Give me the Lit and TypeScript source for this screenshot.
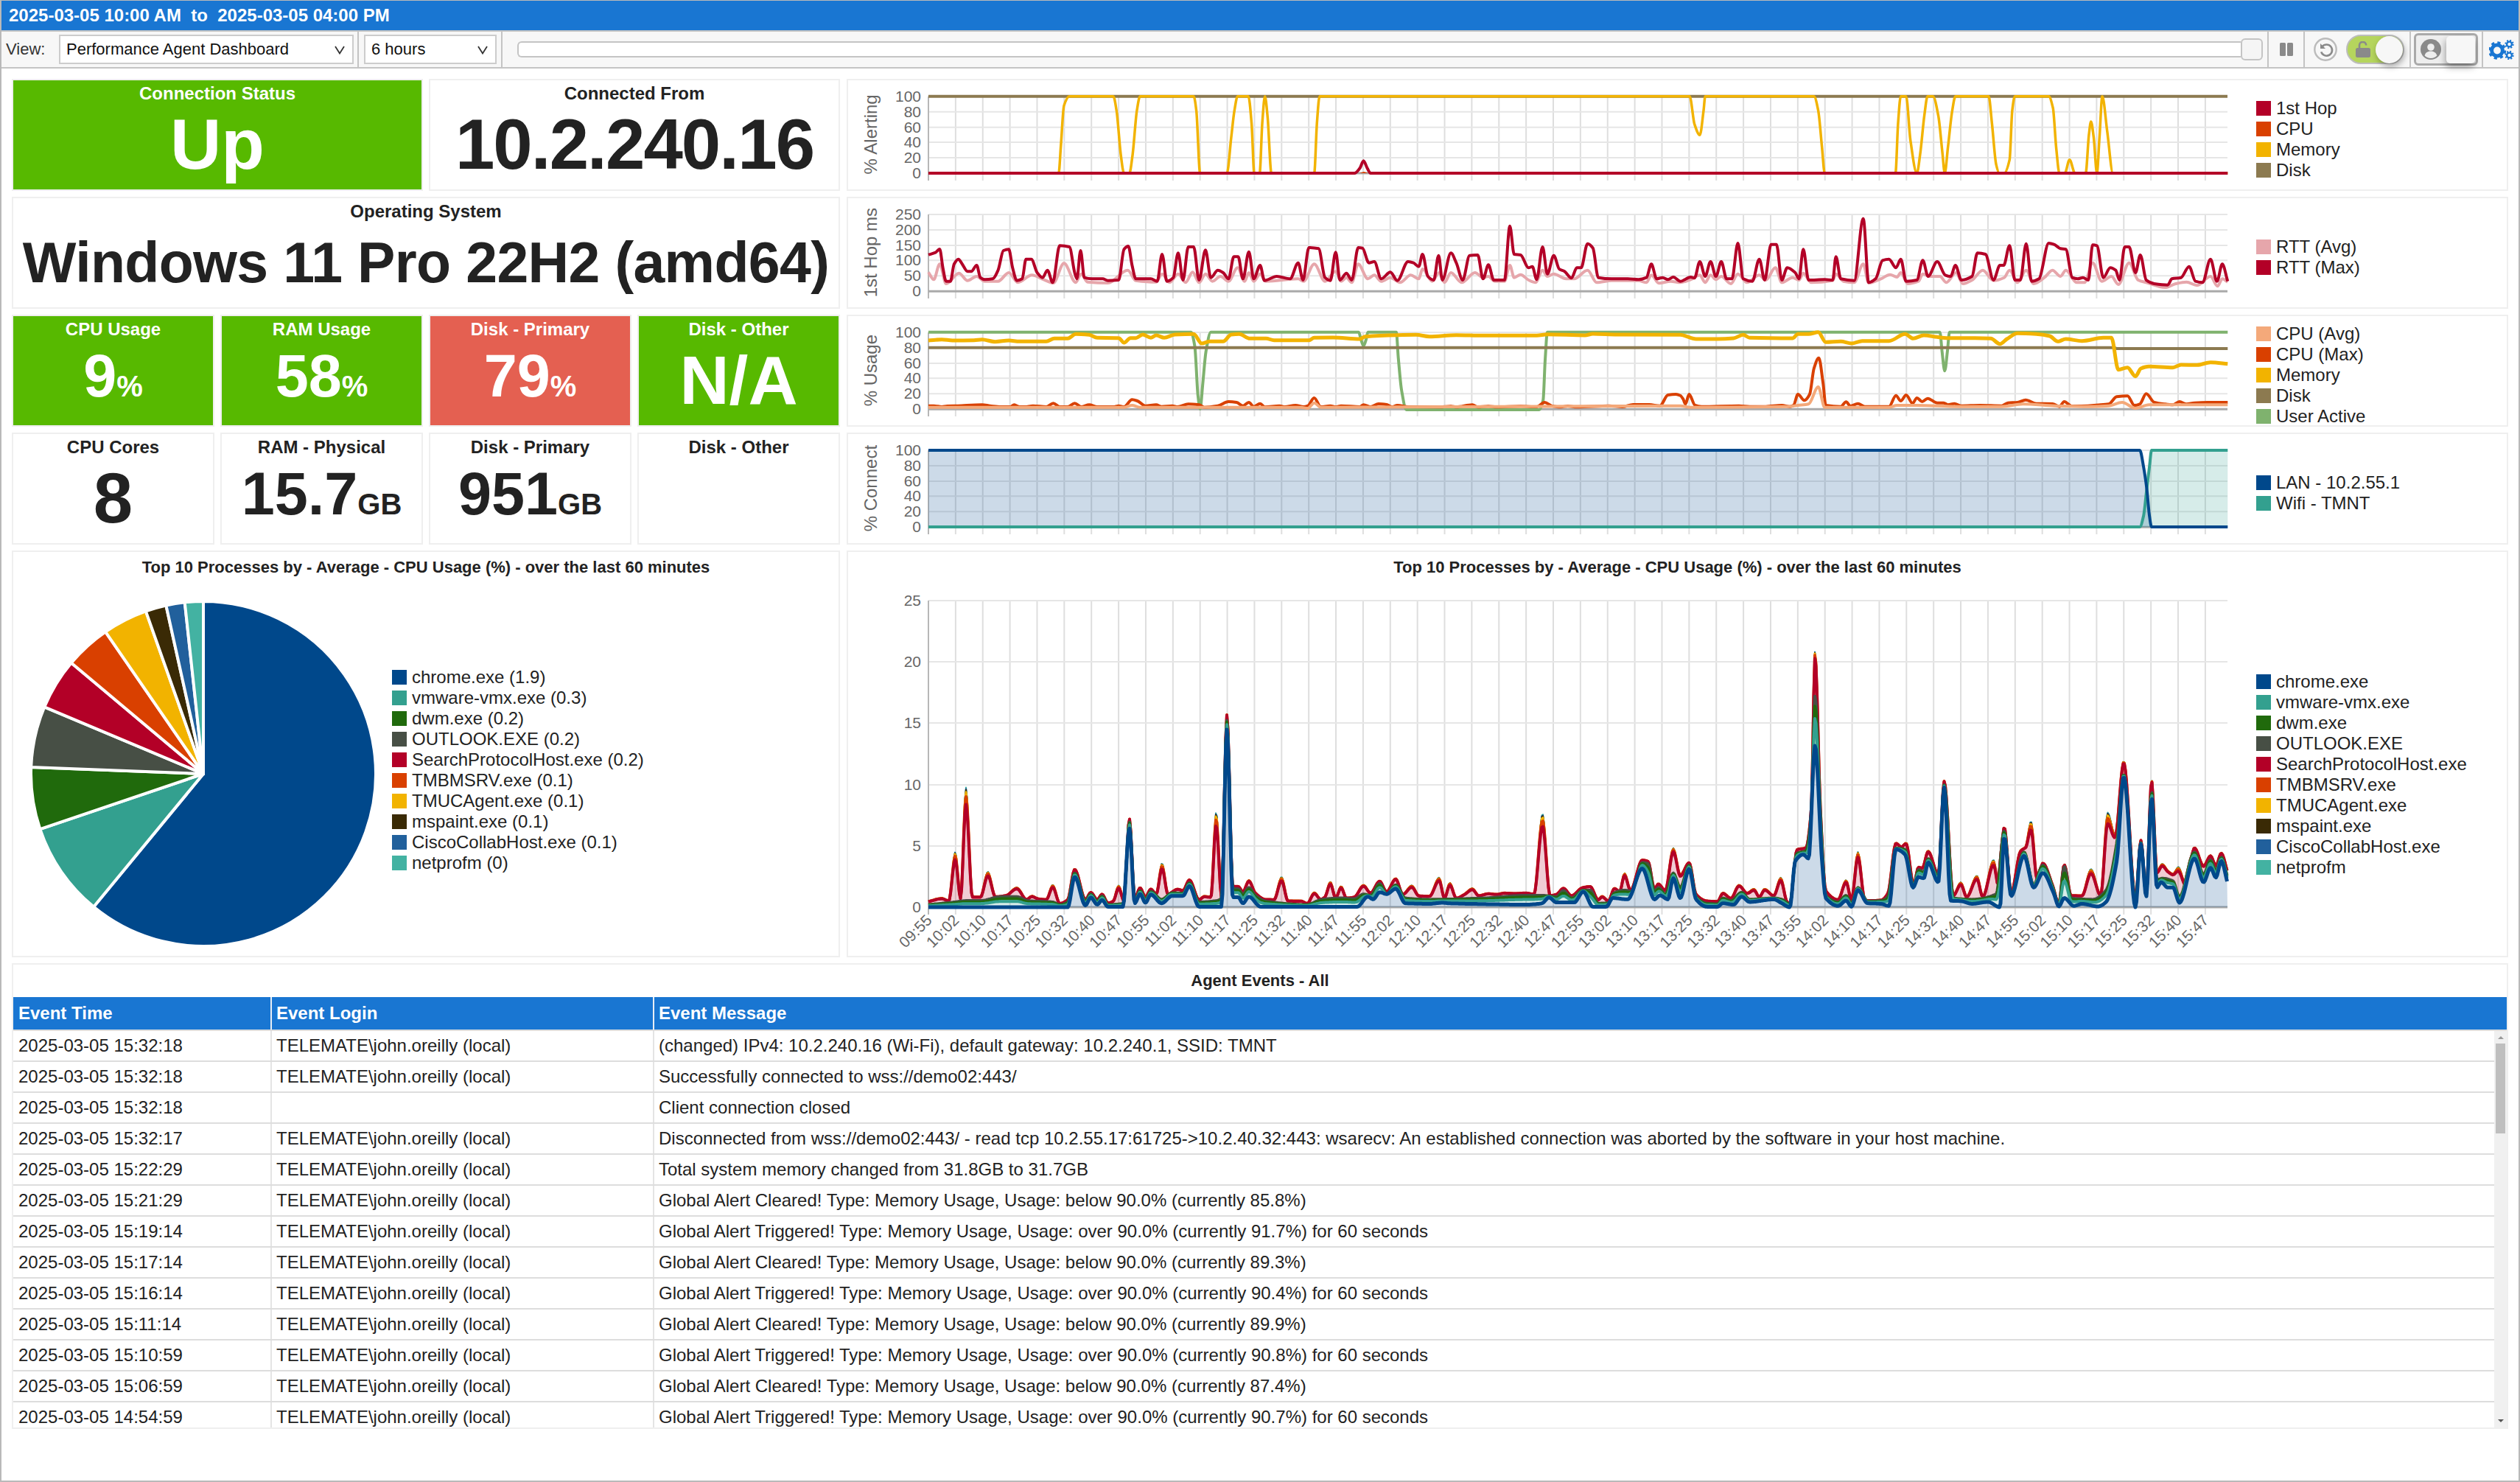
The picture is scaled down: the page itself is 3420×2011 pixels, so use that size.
import { LitElement, html, svg, css } from "lit";
import { customElement } from "lit/decorators.js";

type P = [number, number];
const parse = (s: string): P[] => s.trim().split(/\s+/).map((p) => p.split(",").map(Number) as P);
const ax = (z: number) => 1140 + z / 1.375;
const bx = (z: number) => 2280 + z / 1.375;

/** join the two digitised halves of a series into absolute page coordinates */
function join(a: string, b: string, yf: (z: number) => number): P[] {
  const out: P[] = [];
  for (const [x, y] of parse(a)) out.push([ax(x), yf(y)]);
  for (const [x, y] of parse(b)) {
    const X = bx(x);
    if (X > out[out.length - 1][0] + 0.2) out.push([X, yf(y)]);
  }
  return out;
}

/** monotone-x tangents */
function tangents(p: P[]): number[] {
  const n = p.length;
  const m: number[] = [];
  for (let i = 0; i < n - 1; i++) m.push((p[i + 1][1] - p[i][1]) / (p[i + 1][0] - p[i][0]));
  const t: number[] = [m[0]];
  for (let i = 1; i < n - 1; i++) t.push(m[i - 1] * m[i] <= 0 ? 0 : (2 * m[i - 1] * m[i]) / (m[i - 1] + m[i]));
  t.push(m[n - 2]);
  return t;
}
function mono(p: P[]): string {
  const n = p.length;
  const t = tangents(p);
  let d = `M${p[0][0].toFixed(1)} ${p[0][1].toFixed(1)}`;
  for (let i = 0; i < n - 1; i++) {
    const h = (p[i + 1][0] - p[i][0]) / 3;
    d += `C${(p[i][0] + h).toFixed(1)} ${(p[i][1] + t[i] * h).toFixed(1)} ${(p[i + 1][0] - h).toFixed(1)} ${(p[i + 1][1] - t[i + 1] * h).toFixed(1)} ${p[i + 1][0].toFixed(1)} ${p[i + 1][1].toFixed(1)}`;
  }
  return d;
}

const C = {
  hop: "#b30027", cpu: "#d94000", mem: "#f2b300", disk: "#8c7a50", user: "#7fb26e",
  avg: "#e6a6ab", cpuAvg: "#f4a97a", lan: "#00488b", wifi: "#33a08f",
  dwm: "#206a0c", outlook: "#474f45", mspaint: "#3a2a05", cisco: "#21609c", netprofm: "#43b2a2",
};

const X0 = 1260, X1 = 3023, STEP = 36.87;
const ticks = Array.from({ length: 48 }, (_, i) => X0 + i * STEP);

function frame(top: number, labels: string[], title: string, tickEnd: number, gridY: number[], zero = "#aaaaaa") {
  return svg`
    ${ticks.map((x) => svg`<line class="v" x1=${x} x2=${x} y1=${top} y2=${tickEnd}></line>`)}
    ${gridY.map((y, i) => svg`<line class=${i === gridY.length - 1 ? "z" : "h"} style=${i === gridY.length - 1 ? `stroke:${zero}` : ""} x1=${X0} x2=${X1} y1=${y} y2=${y}></line>`)}
    <line class="axis" x1=${X0} x2=${X0} y1=${top} y2=${tickEnd}></line>
    ${gridY.map((y, i) => svg`<text class="tick" x="1250" y=${y + 7} text-anchor="end">${labels[i]}</text>`)}
    ${title ? svg`<text class="ytitle" transform="translate(1190 ${(top + gridY[gridY.length - 1]) / 2 - 0.5}) rotate(-90)" text-anchor="middle">${title}</text>` : ""}
  `;
}
const line = (p: P[], c: string, w = 4) => svg`<path d=${mono(p)} fill="none" stroke=${c} stroke-width=${w} stroke-linejoin="round"></path>`;
const grid5 = (t: number) => [t, t + 21, t + 42, t + 62.3, t + 83.3, t + 104.3];

// ---- chart 1: alerting
const y1 = (z: number) => 100 + z / 3;
const alertMem = join(
  "165,405 408,405 412,300 418,130 428,92 510,92 516,150 524,330 530,405 540,405 546,330 554,150 560,92 660,92 665,150 672,405 722,405 730,260 736,150 742,92 762,92 768,200 773,405 783,405 788,200 793,92 798,180 805,405 885,405 890,200 895,92 1568,92",
  "0,92 18,92 27,205 37,250 44,150 47,92 250,92 258,150 265,300 270,405 402,405 407,200 412,92 422,92 430,270 442,405 448,330 456,170 462,92 472,92 482,170 490,330 494,405 500,300 508,150 514,92 576,92 582,200 590,370 596,405 605,405 615,350 620,150 625,92 688,92 696,140 702,300 708,405 718,405 727,350 737,405 757,405 763,250 767,195 772,260 778,405 783,250 788,92 797,230 808,405 1022,405",
  y1);
const alertHop = join("165,405 960,405 970,385 977,355 984,385 990,405 1568,405", "0,405 1022,405", y1);

// ---- chart 2: RTT
const rttMax = join(
  "165,737 178,728 186,714 192,790 198,845 206,845 213,775 221,755 228,775 238,805 245,805 255,780 262,830 270,838 285,835 295,800 305,720 315,715 322,790 330,842 340,835 347,755 357,755 368,810 378,830 387,800 397,850 410,700 428,705 438,810 442,835 449,720 456,830 470,835 490,835 500,842 520,840 530,715 538,702 545,780 552,835 580,835 592,845 601,735 610,845 622,830 631,730 640,840 650,705 660,705 670,840 682,718 692,830 705,800 715,810 725,835 735,745 743,745 752,835 763,725 772,835 784,780 792,842 815,825 840,835 855,770 864,840 875,708 893,712 905,830 915,842 925,727 933,840 945,812 955,840 967,708 975,710 987,770 997,765 1010,835 1027,808 1040,842 1060,765 1070,770 1080,785 1087,735 1097,825 1108,840 1117,740 1124,840 1140,730 1150,770 1162,840 1175,740 1190,738 1200,835 1210,778 1220,840 1240,840 1250,620 1258,735 1270,738 1285,790 1292,785 1300,838 1311,705 1320,815 1332,740 1342,795 1352,805 1365,832 1375,790 1383,790 1395,692 1405,710 1415,830 1440,835 1470,835 1490,838 1505,830 1514,775 1524,835 1535,830 1545,838 1555,828 1568,845",
  "0,838 20,828 27,832 37,765 47,825 57,765 67,825 77,765 87,835 97,835 108,690 118,835 135,845 148,755 158,840 170,695 180,695 190,840 200,790 215,810 222,835 230,715 240,840 270,838 285,840 291,745 300,835 325,842 342,590 352,850 365,835 378,760 390,755 403,790 412,755 422,845 442,840 453,760 463,825 480,765 495,820 505,825 514,780 525,840 545,825 555,730 570,735 585,840 597,780 604,780 615,700 625,840 635,840 646,692 656,845 670,835 688,690 698,695 710,712 720,715 732,830 742,835 752,830 762,840 770,697 778,700 790,830 803,790 813,800 820,840 830,705 838,705 850,810 859,738 870,840 885,855 910,860 918,835 935,830 950,785 962,845 975,850 990,755 1002,845 1012,775 1022,845",
  y1);
const rttAvg = join(
  "165,808 175,838 186,775 198,855 222,812 238,842 255,825 270,845 295,845 315,810 332,850 358,820 380,838 398,852 418,772 440,850 450,815 462,848 500,852 537,800 552,842 590,848 601,815 615,850 631,815 645,850 658,808 670,850 682,815 695,845 710,825 725,845 742,790 755,845 763,810 772,845 784,815 795,845 855,835 865,845 885,775 905,845 925,805 935,845 945,830 955,850 967,775 985,835 997,820 1010,845 1027,830 1045,850 1065,820 1080,835 1087,795 1105,845 1118,810 1128,850 1140,810 1160,850 1185,810 1200,830 1210,825 1222,845 1240,845 1250,780 1258,830 1270,818 1285,840 1298,850 1311,800 1320,825 1332,815 1355,835 1370,835 1395,800 1412,850 1440,842 1490,842 1505,850 1514,820 1528,853 1550,845 1568,850",
  "0,842 20,838 37,820 47,850 57,820 67,838 77,825 95,855 108,815 125,850 148,820 160,840 178,790 190,850 210,830 222,840 230,812 245,850 285,842 291,815 305,845 325,850 342,775 352,852 375,835 392,818 405,828 412,810 425,855 445,845 453,815 465,825 485,825 497,850 515,810 528,855 545,840 565,800 585,842 605,830 615,800 630,850 646,800 660,855 680,830 695,800 710,825 720,800 740,850 755,850 770,770 787,845 805,825 818,858 838,770 855,840 870,850 905,870 925,855 945,848 965,862 990,825 1003,865 1012,835 1022,848",
  y1);

// ---- chart 3: usage
const y3 = (z: number) => 420 + z / 3;
const useUser = join(
  "165,92 655,92 662,150 668,350 672,405 677,300 683,170 692,92 968,92 972,120 977,148 982,120 985,92 1038,92 1042,200 1048,330 1057,408 1305,408 1312,370 1316,200 1320,92 1568,92",
  "0,92 485,92 489,170 494,250 499,170 503,92 1022,92", y3);
const useDisk = join("165,155 1568,155", "0,155 810,155 815,159 1022,159", y3);
const useMem = join(
  "165,126 190,122 210,126 250,125 265,122 290,131 315,126 335,130 385,130 400,118 425,118 440,100 465,103 480,115 520,116 530,135 542,116 552,116 565,102 580,115 590,105 605,115 625,102 660,100 675,138 690,130 715,130 730,102 745,100 765,118 795,118 810,125 875,125 885,115 920,114 970,120 980,110 1040,104 1075,103 1100,110 1150,104 1200,106 1300,106 1320,101 1390,105 1405,99 1450,102 1568,103",
  "0,100 30,120 70,120 100,117 118,103 130,115 210,117 220,100 240,100 258,92 272,133 300,130 320,138 340,128 390,128 420,100 435,118 455,105 480,112 500,116 550,116 580,118 597,140 610,120 630,97 665,100 690,108 705,130 720,120 750,128 790,115 805,115 818,245 835,236 850,272 860,240 875,232 920,236 935,225 965,226 990,215 1022,221",
  y3);
const useMax = join(
  "165,392 175,392 190,396 200,393 220,392 265,388 280,392 300,396 318,396 325,388 335,396 345,396 360,392 385,396 398,382 410,396 425,396 438,382 450,396 465,388 480,396 510,396 520,392 530,396 545,367 555,372 570,392 590,388 600,395 620,392 630,396 650,385 670,388 680,398 705,392 725,375 740,378 752,392 763,378 772,395 784,383 793,397 820,392 830,396 850,390 865,396 873,392 885,360 897,396 915,392 925,396 935,392 970,396 977,388 990,396 1005,384 1020,387 1030,396 1040,390 1060,396 1120,397 1140,394 1150,397 1180,388 1190,397 1210,394 1225,397 1270,394 1300,396 1315,378 1328,392 1345,397 1358,393 1375,397 1435,392 1460,396 1480,387 1510,387 1530,392 1545,348 1560,345 1568,350",
  "0,385 6,365 10,385 17,345 28,390 40,395 110,392 130,395 160,395 190,390 205,395 212,390 220,345 232,370 242,345 250,240 259,197 267,300 272,390 300,395 310,376 318,393 332,383 345,395 390,395 403,350 412,372 422,348 434,382 442,360 452,375 462,362 480,380 492,380 500,388 512,383 525,392 560,390 600,392 612,380 630,378 645,368 665,383 695,384 708,395 717,375 730,392 750,393 785,388 800,385 815,355 835,352 848,390 858,385 870,343 885,378 905,385 920,388 932,375 945,385 960,380 985,378 1022,378",
  y3);
const useAvg = join(
  "165,398 530,398 545,390 560,398 860,398 873,402 885,380 897,398 1545,392 1568,392",
  "0,392 20,398 200,395 220,390 240,385 258,315 270,398 390,398 405,390 440,390 520,395 600,395 640,385 700,392 760,395 800,392 825,378 850,402 875,388 1022,388",
  y3);

// ---- chart 4: connection
const conLan = join("165,573 1568,573", "0,573 858,573 865,640 871,730 876,840 880,885 1022,885", y3);
const conWifi = join("165,885 1568,885", "0,885 858,885 865,840 871,730 876,640 880,573 1022,573", y3);
const area = (p: P[], base: number) => `${mono(p)}L${p[p.length - 1][0]} ${base}L${p[0][0]} ${base}Z`;

// ---- big stacked chart
const yb = (z: number) => 740 + z / 2.8;
const chC = join(
  "165,1375 425,1375 438,1260 458,1368 468,1338 480,1365 489,1348 500,1373 528,1373 540,1075 550,1360 560,1325 570,1358 580,1327 600,1360 620,1332 640,1332 652,1295 670,1373 712,1373 722,700 733,1337 743,1337 752,1360 763,1335 785,1373 965,1373 985,1335 995,1345 1007,1318 1020,1325 1037,1305 1055,1360 1100,1362 1125,1358 1135,1360 1200,1363 1280,1365 1310,1360 1323,1338 1337,1357 1370,1357 1387,1316 1405,1373 1430,1373 1442,1340 1470,1345 1497,1228 1520,1345 1530,1330 1545,1345 1555,1265 1568,1340",
  "0,1350 17,1230 30,1345 50,1373 70,1373 80,1360 100,1365 115,1335 130,1355 175,1345 190,1360 205,1375 215,1200 230,1175 240,1190 252,760 265,1200 272,1340 295,1370 310,1350 320,1373 332,1310 350,1360 375,1362 390,1370 403,1155 420,1175 435,1300 445,1260 455,1265 463,1205 482,1280 493,920 505,1350 525,1352 545,1362 575,1355 597,1375 605,1110 618,1332 642,1180 660,1300 677,1245 697,1320 707,1372 717,1340 735,1370 750,1362 780,1372 795,1355 815,1200 828,880 850,1375 860,1135 870,1335 880,960 890,1300 898,1280 910,1300 920,1300 932,1358 960,1190 977,1280 990,1225 1000,1262 1010,1200 1022,1285",
  yb);
const chT = join(
  "165,1352 190,1340 203,1350 215,1165 225,1340 235,920 247,1335 262,1335 276,1240 290,1335 310,1330 330,1300 348,1345 358,1332 370,1342 385,1345 397,1290 410,1360 425,1345 438,1230 458,1345 468,1318 480,1345 489,1325 500,1358 510,1350 520,1292 530,1350 540,1038 550,1340 560,1300 570,1335 580,1305 590,1325 601,1208 612,1325 630,1305 640,1310 652,1270 670,1345 680,1332 692,1335 702,1012 712,1335 722,642 733,1295 743,1295 752,1315 763,1272 775,1320 795,1345 810,1345 824,1260 836,1350 860,1350 872,1360 885,1318 897,1345 905,1335 915,1278 925,1340 935,1295 945,1340 960,1335 977,1290 990,1320 1007,1275 1020,1315 1037,1265 1050,1325 1067,1292 1080,1330 1100,1332 1118,1262 1128,1340 1138,1282 1150,1340 1165,1325 1180,1303 1192,1330 1210,1322 1225,1325 1240,1320 1260,1322 1280,1320 1295,1325 1311,1020 1325,1330 1337,1325 1350,1302 1365,1330 1385,1300 1400,1295 1415,1345 1422,1332 1434,1350 1445,1302 1455,1315 1464,1245 1475,1310 1497,1195 1508,1200 1520,1305 1527,1285 1540,1310 1555,1150 1568,1250",
  "0,1310 17,1205 30,1325 50,1350 70,1352 80,1320 95,1340 110,1290 125,1320 138,1305 148,1335 158,1305 175,1330 188,1262 200,1355 208,1360 218,1155 235,1148 245,1000 252,400 262,1000 272,1310 295,1345 310,1272 320,1345 332,1165 345,1350 375,1348 388,1320 403,1130 413,1145 422,1130 436,1290 445,1222 452,1225 463,1160 482,1250 493,895 510,1330 524,1280 535,1335 554,1255 565,1335 585,1195 597,1330 605,1068 618,1320 635,1160 645,1145 655,1048 667,1280 677,1207 695,1290 707,1360 717,1213 730,1330 750,1330 767,1230 785,1330 798,1015 812,1100 828,820 850,1340 860,1120 870,1320 880,890 890,1240 900,1210 910,1235 920,1248 930,1222 945,1300 960,1148 977,1215 990,1178 1000,1215 1010,1168 1022,1240",
  yb);
const chP = join(
  "165,1365 215,1355 235,1350 262,1350 300,1335 330,1335 350,1350 397,1355 410,1365 425,1355 438,1245 458,1352 468,1325 480,1352 489,1332 500,1365 530,1360 540,1050 550,1350 560,1312 570,1345 580,1315 600,1345 620,1320 640,1322 652,1282 670,1355 702,1350 712,1340 722,665 733,1305 743,1305 752,1325 763,1300 775,1330 795,1352 870,1365 900,1345 935,1340 960,1343 977,1325 990,1330 1007,1285 1020,1325 1037,1290 1055,1340 1100,1345 1200,1340 1280,1330 1310,1330 1337,1335 1350,1312 1365,1340 1387,1310 1400,1310 1415,1360 1434,1358 1445,1320 1464,1310 1480,1315 1497,1205 1508,1210 1520,1315 1527,1300 1540,1325 1555,1245 1568,1300",
  "0,1325 17,1215 30,1335 50,1360 70,1362 80,1340 95,1350 115,1318 130,1345 175,1340 190,1345 205,1362 218,1170 235,1160 245,1020 252,570 262,1020 272,1330 295,1355 310,1330 320,1360 332,1300 350,1352 375,1350 388,1335 403,1150 420,1155 436,1295 445,1232 455,1240 463,1190 482,1258 493,910 510,1340 545,1345 590,1325 605,1085 618,1325 642,1165 660,1290 677,1215 695,1295 707,1365 717,1220 730,1340 770,1345 795,1310 815,1130 828,870 850,1350 860,1130 870,1330 880,935 890,1270 900,1265 920,1275 932,1335 960,1165 977,1250 990,1195 1000,1235 1010,1185 1022,1260",
  yb);

/** evaluate the monotone curve through p at every x of xs */
function sample(p: P[], xs: number[]): number[] {
  const t = tangents(p);
  let k = 0;
  return xs.map((x) => {
    while (k < p.length - 2 && p[k + 1][0] < x) k++;
    const h = p[k + 1][0] - p[k][0];
    const s = Math.min(1, Math.max(0, (x - p[k][0]) / h));
    const s2 = s * s, s3 = s2 * s;
    return (2 * s3 - 3 * s2 + 1) * p[k][1] + (s3 - 2 * s2 + s) * h * t[k] + (-2 * s3 + 3 * s2) * p[k + 1][1] + (s3 - s2) * h * t[k + 1];
  });
}
const xs: number[] = [];
for (let x = X0; x <= X1; x += 1.5) xs.push(x);
const sC = sample(chC, xs);
const sP = sample(chP, xs).map((v, i) => Math.min(v, sC[i]));
const sT = sample(chT, xs).map((v, i) => Math.min(v, sP[i]));
const mix = (a: number[], b: number[], t: number) => a.map((v, i) => v + (b[i] - v) * t);
const stack: { c: string; y: number[]; w: number }[] = [
  { c: C.lan, y: sC, w: 5 },
  { c: C.wifi, y: mix(sC, sP, 0.55), w: 4 },
  { c: C.dwm, y: mix(sC, sP, 0.8), w: 4 },
  { c: C.outlook, y: sP, w: 4 },
  { c: C.hop, y: mix(sP, sT, 0.85), w: 4 },
  { c: C.cpu, y: mix(sP, sT, 0.92), w: 4 },
  { c: C.mem, y: mix(sP, sT, 0.96), w: 3 },
  { c: C.mspaint, y: mix(sP, sT, 0.98), w: 2 },
  { c: C.cisco, y: mix(sP, sT, 0.99), w: 2 },
  { c: C.netprofm, y: sT, w: 2 },
];
const poly = (y: number[]) => y.map((v, i) => `${i ? "L" : "M"}${xs[i]} ${v.toFixed(1)}`).join("");
const back = (y: number[]) => y.map((_, i) => `L${xs[y.length - 1 - i]} ${y[y.length - 1 - i].toFixed(1)}`).join("");

const timeLabels = ticks.map((_, i) => {
  const t = Math.floor(595 + i * 7.5);
  return `${String(Math.floor(t / 60)).padStart(2, "0")}:${String(t % 60).padStart(2, "0")}`;
});

// ---- pie
const pieData: [string, string, number][] = [
  ["chrome.exe (1.9)", C.lan, 219.5],
  ["vmware-vmx.exe (0.3)", C.wifi, 251.3],
  ["dwm.exe (0.2)", C.dwm, 272.2],
  ["OUTLOOK.EXE (0.2)", C.outlook, 292.8],
  ["SearchProtocolHost.exe (0.2)", C.hop, 310],
  ["TMBMSRV.exe (0.1)", C.cpu, 325.4],
  ["TMUCAgent.exe (0.1)", C.mem, 340.5],
  ["mspaint.exe (0.1)", C.mspaint, 347.5],
  ["CiscoCollabHost.exe (0.1)", C.cisco, 353.8],
  ["netprofm (0)", C.netprofm, 360],
];
const PCX = 276, PCY = 1050, PR = 234;
const pol = (a: number): P => {
  const r = ((a - 90) * Math.PI) / 180;
  return [PCX + PR * Math.cos(r), PCY + PR * Math.sin(r)];
};
const slices = pieData.map(([, c, end], i) => {
  const start = i ? pieData[i - 1][2] : 0;
  const [x0, y0] = pol(start);
  const [x1, y1_] = pol(end);
  const large = end - start > 180 ? 1 : 0;
  return svg`<path d="M${PCX} ${PCY}L${x0} ${y0}A${PR} ${PR} 0 ${large} 1 ${x1} ${y1_}Z" fill=${c} stroke="#fff" stroke-width="4" stroke-linejoin="round"></path>`;
});

const events: [string, string, string][] = [
  ["2025-03-05 15:32:18", "TELEMATE\\john.oreilly (local)", "(changed) IPv4: 10.2.240.16 (Wi-Fi), default gateway: 10.2.240.1, SSID: TMNT"],
  ["2025-03-05 15:32:18", "TELEMATE\\john.oreilly (local)", "Successfully connected to wss://demo02:443/"],
  ["2025-03-05 15:32:18", "", "Client connection closed"],
  ["2025-03-05 15:32:17", "TELEMATE\\john.oreilly (local)", "Disconnected from wss://demo02:443/ - read tcp 10.2.55.17:61725->10.2.40.32:443: wsarecv: An established connection was aborted by the software in your host machine."],
  ["2025-03-05 15:22:29", "TELEMATE\\john.oreilly (local)", "Total system memory changed from 31.8GB to 31.7GB"],
  ["2025-03-05 15:21:29", "TELEMATE\\john.oreilly (local)", "Global Alert Cleared! Type: Memory Usage, Usage: below 90.0% (currently 85.8%)"],
  ["2025-03-05 15:19:14", "TELEMATE\\john.oreilly (local)", "Global Alert Triggered! Type: Memory Usage, Usage: over 90.0% (currently 91.7%) for 60 seconds"],
  ["2025-03-05 15:17:14", "TELEMATE\\john.oreilly (local)", "Global Alert Cleared! Type: Memory Usage, Usage: below 90.0% (currently 89.3%)"],
  ["2025-03-05 15:16:14", "TELEMATE\\john.oreilly (local)", "Global Alert Triggered! Type: Memory Usage, Usage: over 90.0% (currently 90.4%) for 60 seconds"],
  ["2025-03-05 15:11:14", "TELEMATE\\john.oreilly (local)", "Global Alert Cleared! Type: Memory Usage, Usage: below 90.0% (currently 89.9%)"],
  ["2025-03-05 15:10:59", "TELEMATE\\john.oreilly (local)", "Global Alert Triggered! Type: Memory Usage, Usage: over 90.0% (currently 90.8%) for 60 seconds"],
  ["2025-03-05 15:06:59", "TELEMATE\\john.oreilly (local)", "Global Alert Cleared! Type: Memory Usage, Usage: below 90.0% (currently 87.4%)"],
  ["2025-03-05 14:54:59", "TELEMATE\\john.oreilly (local)", "Global Alert Triggered! Type: Memory Usage, Usage: over 90.0% (currently 90.7%) for 60 seconds"],
];

const legend = (items: [string, string][], cls = "") => html`
  <div class="legend ${cls}">
    ${items.map(([t, c]) => html`<div class="lrow"><i class="sw" style="background:${c}"></i><span>${t}</span></div>`)}
  </div>`;

const chevron = html`<svg class="chev" width="14" height="12" viewBox="0 0 14 12"><path d="M1 1l6 9.5L13 1" fill="none" stroke="#333" stroke-width="1.8"></path></svg>`;

const pctLabels = ["100", "80", "60", "40", "20", "0"];

@customElement("app-root")
export class AppRoot extends LitElement {
  static styles = css`
    :host {
      display: block; width: 3420px; height: 2011px; box-sizing: border-box; overflow: hidden;
      border: 2px solid #b9b9b9; border-top-width: 1px; background: #fff; color: #222;
      font-family: "Liberation Sans", Arial, sans-serif; font-size: 24px;
    }
    .titlebar { height: 40px; background: #1976d2; color: #fff; font-weight: bold; display: flex; align-items: center; padding-left: 10px; white-space: pre; }
    .toolbar { height: 52px; box-sizing: border-box; background: #f7f7f7; border-top: 2px solid #c4c4c4; border-bottom: 2px solid #c4c4c4; display: flex; font-size: 22px; }
    .seg { display: flex; align-items: center; box-sizing: border-box; border-right: 2px solid #c4c4c4; flex: none; position: relative; }
    .s1 { width: 485px; padding-left: 6px; }
    .s2 { width: 195px; padding-left: 7px; }
    .s3 { flex: 1; padding: 0 6px 0 20px; }
    .s4 { width: 49px; justify-content: center; }
    .s5 { width: 144px; padding-left: 12px; gap: 12px; }
    .s6 { width: 98px; padding-left: 4px; }
    .s7 { width: 48px; border-right: 0; padding-left: 8px; }
    .view { width: 72px; color: #333; }
    .sel { position: relative; box-sizing: border-box; height: 40px; border: 2px solid #ccc; background: #fff; display: flex; align-items: center; padding-left: 8px; color: #111; }
    .chev { position: absolute; right: 10px; top: 13px; }
    .sel1 { width: 400px; }
    .sel2 { width: 180px; }
    .track { flex: 1; height: 22px; box-sizing: border-box; background: #fff; border: 2px solid #c4c4c4; border-right: 0; border-radius: 6px 0 0 6px; }
    .thumb { width: 30px; height: 30px; box-sizing: border-box; background: #f5f5f5; border: 2px solid #c4c4c4; border-radius: 6px; }
    .undo { width: 32px; height: 32px; flex: none; }
    .lock { width: 79px; height: 40px; box-sizing: border-box; border: 2px solid #bdbdbd; border-radius: 20px; background: #b5d55d; display: flex; align-items: center; justify-content: space-between; padding-left: 11px; flex: none; }
    .knob { width: 37px; height: 37px; border-radius: 50%; background: #f7f7f7; box-shadow: 2px 4px 8px rgba(0, 0, 0, 0.35); }
    .user { width: 87px; height: 44px; box-sizing: border-box; border: 3px solid #aaa; border-radius: 6px; background: #eee; display: flex; align-items: center; justify-content: space-between; padding-left: 6px; padding-right: 1px; flex: none; }
    .uknob { width: 39px; height: 37px; background: #f7f7f7; border-radius: 5px; box-shadow: -1px 5px 10px rgba(0, 0, 0, 0.35); }

    .main { padding: 14px 14px 0; display: grid; grid-template-columns: 1124px 2255px; grid-template-rows: 152px 152px 152px 152px 552px 632px; gap: 8px 9px; }
    .c2 { display: grid; grid-template-columns: 1fr 1fr; gap: 8px; }
    .c4 { display: grid; grid-template-columns: repeat(4, 275px); gap: 8px; }
    .card { box-sizing: border-box; border: 2px solid #efefef; background: #fff; display: flex; flex-direction: column; min-width: 0; }
    .green { background: #57b900; background-clip: padding-box; color: #fff; }
    .red { background: #e46051; background-clip: padding-box; color: #fff; }
    .ct { padding-top: 4px; line-height: 28px; text-align: center; font-weight: bold; flex: none; }
    .val { flex: 1; display: flex; align-items: center; justify-content: center; padding-bottom: 6px; font-weight: bold; line-height: 1; white-space: nowrap; min-height: 0; }
    .v96 { font-size: 96px; }
    .tight96 { letter-spacing: -1.9px; }
    .v77 { font-size: 77px; letter-spacing: -0.65px; }
    .v93 { font-size: 93px; }
    .kpi { padding-bottom: 18px; font-size: 81px; }
    .kpi span { display: inline; }
    .u40 { font-size: 40px; }
    .chartcard { flex-direction: row; }
    .chartcard svg { display: block; flex: none; }
    text { font-family: "Liberation Sans", Arial, sans-serif; }
    .v { stroke: #dedede; stroke-width: 2; }
    .h { stroke: #e6e6e6; stroke-width: 2; }
    .z { stroke-width: 3; }
    .axis { stroke: #aaa; stroke-width: 1.5; }
    .tick { font-size: 21px; fill: #666; }
    .ytitle { font-size: 24px; fill: #666; }
    .legend { display: flex; flex-direction: column; justify-content: center; flex: none; padding-top: 12px; }
    .lrow { height: 28px; display: flex; align-items: center; gap: 7px; white-space: nowrap; }
    .sw { display: block; width: 20px; height: 20px; flex: none; }
    .wide { flex-direction: column; }
    .wtitle { height: 42px; line-height: 42px; text-align: center; font-weight: bold; font-size: 22px; flex: none; }
    .wbody { flex: 1; display: flex; min-height: 0; }
    .pl { padding-top: 2px; }
    .bl { padding-top: 14px; }
    .events { grid-column: 1 / -1; }
    .etitle { height: 44px; line-height: 44px; text-align: center; font-weight: bold; font-size: 22px; flex: none; }
    .ehead { height: 44px; background: #1976d2; color: #fff; font-weight: bold; display: grid; grid-template-columns: 351px 519px 1fr; flex: none; }
    .ehead div { line-height: 44px; padding-left: 7px; border-right: 2px solid #e8eef5; }
    .ehead div + div { padding-left: 6px; }
    .ehead div:last-child { border-right: 0; }
    .ebody { flex: 1; display: flex; min-height: 0; border-top: 2px solid #ddd; }
    .rows { flex: 1; overflow: hidden; }
    .row { height: 40px; border-bottom: 2px solid #ddd; display: grid; grid-template-columns: 351px 519px 1fr; }
    .row div { line-height: 40px; padding-left: 7px; border-right: 2px solid #e4e4e4; white-space: nowrap; overflow: hidden; box-sizing: border-box; }
    .row div + div { padding-left: 6px; }
    .row div:last-child { border-right: 0; }
    .sb { width: 17px; background: #f0f0f0; flex: none; display: flex; flex-direction: column; align-items: center; padding-top: 7px; box-sizing: border-box; }
    .up { width: 0; height: 0; border-left: 4px solid transparent; border-right: 4px solid transparent; border-bottom: 4px solid #999; }
    .sth { width: 13px; height: 122px; background: #bfbfbf; margin-top: 6px; }
    .dn { width: 0; height: 0; border-left: 4px solid transparent; border-right: 4px solid transparent; border-top: 4px solid #555; margin-top: auto; margin-bottom: 7px; }
  `;

  render() {
    const top1 = 130.7, top2 = 291, top3 = 451, top4 = 611;
    const chart = (y: number, body: unknown) => html`<svg width="1911" height="148" viewBox="1151 ${y} 1911 148">${body}</svg>`;
    return html`
      <div class="titlebar">2025-03-05 10:00 AM  to  2025-03-05 04:00 PM</div>
      <div class="toolbar">
        <div class="seg s1"><span class="view">View:</span><div class="sel sel1">Performance Agent Dashboard${chevron}</div></div>
        <div class="seg s2"><div class="sel sel2">6 hours${chevron}</div></div>
        <div class="seg s3"><div class="track"></div><div class="thumb"></div></div>
        <div class="seg s4"><svg width="18" height="18" viewBox="0 0 18 18"><rect width="8" height="18" rx="1.5" fill="#8a8a8a"></rect><rect x="10" width="8" height="18" rx="1.5" fill="#8a8a8a"></rect></svg></div>
        <div class="seg s5">
          <svg class="undo" viewBox="0 0 32 32"><circle cx="16" cy="16" r="14.7" fill="none" stroke="#bbb" stroke-width="2.4"></circle><path d="M11.6 12.2a7.6 7.6 0 1 1-1.4 7.2" fill="none" stroke="#8a8a8a" stroke-width="2.6"></path><path d="M9 8v7h7z" fill="#8a8a8a"></path></svg>
          <div class="lock">
            <svg width="21" height="22" viewBox="0 0 21 22"><rect y="9" width="20" height="13" rx="2.5" fill="#8a8a8a"></rect><path d="M5 9V5.5a4.6 4.6 0 0 1 9.2 0" fill="none" stroke="#8a8a8a" stroke-width="2.6"></path></svg>
            <div class="knob"></div>
          </div>
        </div>
        <div class="seg s6">
          <div class="user">
            <svg width="28" height="28" viewBox="0 0 28 28"><circle cx="14" cy="14" r="14" fill="#8a8a8a"></circle><circle cx="14" cy="11" r="4.8" fill="#eee"></circle><path d="M5.6 22.5c1-4.6 5-6 8.4-6s7.4 1.4 8.4 6a12 12 0 0 1-16.8 0z" fill="#eee"></path></svg>
            <div class="uknob"></div>
          </div>
        </div>
        <div class="seg s7">
          <svg width="34" height="27" viewBox="0 0 34 27" fill="none" stroke="#1976d2">
            <circle cx="11" cy="14.5" r="7.4" stroke-width="5"></circle>
            <circle cx="11" cy="14.5" r="10.4" stroke-width="3.6" stroke-dasharray="4.08 4.09"></circle>
            <circle cx="27.5" cy="6" r="3.4" stroke-width="2.4"></circle>
            <circle cx="27.5" cy="6" r="5.2" stroke-width="2" stroke-dasharray="2.04 2.04"></circle>
            <circle cx="27.5" cy="21" r="3.4" stroke-width="2.4"></circle>
            <circle cx="27.5" cy="21" r="5.2" stroke-width="2" stroke-dasharray="2.04 2.04"></circle>
          </svg>
        </div>
      </div>

      <div class="main">
        <div class="c2">
          <div class="card green"><div class="ct">Connection Status</div><div class="val v96">Up</div></div>
          <div class="card"><div class="ct">Connected From</div><div class="val v96 tight96">10.2.240.16</div></div>
        </div>
        <div class="card chartcard">
          ${chart(109, svg`
            ${frame(top1, pctLabels, "% Alerting", 245, grid5(top1))}
            ${line([[X0, top1], [X1, top1]], C.disk)}
            ${line(alertMem, C.mem, 3.5)}
            ${line(alertHop, C.hop)}
            <path d="M1845 235l6-2 6 2z" fill=${C.cpu}></path>
          `)}
          ${legend([["1st Hop", C.hop], ["CPU", C.cpu], ["Memory", C.mem], ["Disk", C.disk]])}
        </div>

        <div class="card"><div class="ct">Operating System</div><div class="val v77">Windows 11 Pro 22H2 (amd64)</div></div>
        <div class="card chartcard">
          ${chart(269, svg`
            ${frame(top2, ["250", "200", "150", "100", "50", "0"], "1st Hop ms", 405, grid5(top2))}
            ${line(rttAvg, C.avg)}
            ${line(rttMax, C.hop)}
          `)}
          ${legend([["RTT (Avg)", C.avg], ["RTT (Max)", C.hop]])}
        </div>

        <div class="c4">
          <div class="card green"><div class="ct">CPU Usage</div><div class="val kpi"><span>9<span class="u40">%</span></span></div></div>
          <div class="card green"><div class="ct">RAM Usage</div><div class="val kpi"><span>58<span class="u40">%</span></span></div></div>
          <div class="card red"><div class="ct">Disk - Primary</div><div class="val kpi"><span>79<span class="u40">%</span></span></div></div>
          <div class="card green"><div class="ct">Disk - Other</div><div class="val v93">N/A</div></div>
        </div>
        <div class="card chartcard">
          ${chart(429, svg`
            ${frame(top3, pctLabels, "% Usage", 565, grid5(top3))}
            ${line(useUser, C.user)}
            ${line(useDisk, C.disk)}
            ${line(useMem, C.mem, 5)}
            ${line(useMax, C.cpu)}
            ${line(useAvg, C.cpuAvg)}
          `)}
          ${legend([["CPU (Avg)", C.cpuAvg], ["CPU (Max)", C.cpu], ["Memory", C.mem], ["Disk", C.disk], ["User Active", C.user]])}
        </div>

        <div class="c4">
          <div class="card"><div class="ct">CPU Cores</div><div class="val v96">8</div></div>
          <div class="card"><div class="ct">RAM - Physical</div><div class="val kpi"><span>15.7<span class="u40">GB</span></span></div></div>
          <div class="card"><div class="ct">Disk - Primary</div><div class="val kpi"><span>951<span class="u40">GB</span></span></div></div>
          <div class="card"><div class="ct">Disk - Other</div></div>
        </div>
        <div class="card chartcard">
          ${chart(589, svg`
            ${frame(top4, pctLabels, "% Connect", 725, grid5(top4))}
            <path d=${area(conLan, 715.3)} fill=${C.lan} opacity="0.2"></path>
            <path d=${area(conWifi, 715.3)} fill=${C.wifi} opacity="0.2"></path>
            ${line(conWifi, C.wifi)}
            ${line(conLan, C.lan)}
          `)}
          ${legend([["LAN - 10.2.55.1", C.lan], ["Wifi - TMNT", C.wifi]])}
        </div>

        <div class="card wide">
          <div class="wtitle">Top 10 Processes by - Average - CPU Usage (%) - over the last 60 minutes</div>
          <div class="wbody">
            <svg width="514" height="506" viewBox="18 791 514 506" style="display:block;flex:none">${slices}</svg>
            ${legend(pieData.map(([t, c]) => [t, c] as [string, string]), "pl")}
          </div>
        </div>
        <div class="card wide">
          <div class="wtitle">Top 10 Processes by - Average - CPU Usage (%) - over the last 60 minutes</div>
          <div class="wbody">
            <svg width="1911" height="506" viewBox="1151 791 1911 506" style="display:block;flex:none">
              ${frame(815, ["25", "20", "15", "10", "5", "0"], "", 1241, [815, 898, 981, 1065, 1148, 1231])}
              ${stack.map((s, i) => svg`<path d=${poly(s.y) + (i ? back(stack[i - 1].y) : `L${X1} 1231L${X0} 1231`) + "Z"} fill=${s.c} opacity="0.2"></path>`)}
              ${stack.slice().reverse().map((s) => svg`<path d=${poly(s.y)} fill="none" stroke=${s.c} stroke-width=${s.w} stroke-linejoin="round"></path>`)}
              ${ticks.map((x, i) => svg`<text class="tick" transform="translate(${x + 6} 1250) rotate(-45)" text-anchor="end">${timeLabels[i]}</text>`)}
            </svg>
            ${legend([["chrome.exe", C.lan], ["vmware-vmx.exe", C.wifi], ["dwm.exe", C.dwm], ["OUTLOOK.EXE", C.outlook], ["SearchProtocolHost.exe", C.hop], ["TMBMSRV.exe", C.cpu], ["TMUCAgent.exe", C.mem], ["mspaint.exe", C.mspaint], ["CiscoCollabHost.exe", C.cisco], ["netprofm", C.netprofm]], "bl")}
          </div>
        </div>

        <div class="card events">
          <div class="etitle">Agent Events - All</div>
          <div class="ehead"><div>Event Time</div><div>Event Login</div><div>Event Message</div></div>
          <div class="ebody">
            <div class="rows">
              ${events.map((e) => html`<div class="row"><div>${e[0]}</div><div>${e[1]}</div><div>${e[2]}</div></div>`)}
            </div>
            <div class="sb"><div class="up"></div><div class="sth"></div><div class="dn"></div></div>
          </div>
        </div>
      </div>
    `;
  }
}
